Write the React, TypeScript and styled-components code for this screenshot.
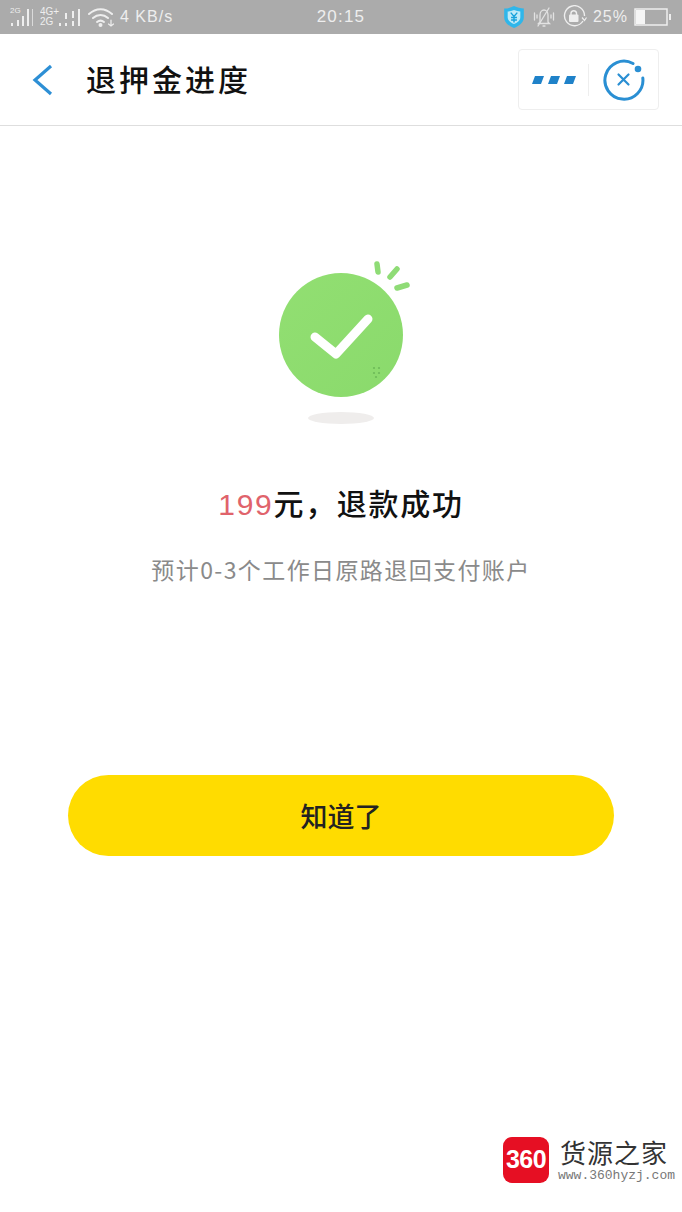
import * as React from 'react';
import styled, { createGlobalStyle } from 'styled-components';

const GlobalStyle = createGlobalStyle`
  html, body {
    margin: 0;
    padding: 0;
    background: #fff;
  }
  * {
    box-sizing: border-box;
  }
`;

const cjk = `"Noto Sans CJK SC", "Noto Sans", sans-serif`;

const Page = styled.div`
  position: relative;
  width: 682px;
  height: 1212px;
  overflow: hidden;
  background: #fff;
  font-family: ${cjk};
`;

const StatusBar = styled.div`
  display: grid;
  grid-template-columns: 1fr auto 1fr;
  align-items: center;
  height: 34px;
  padding: 0 10px;
  background: #ababab;
  color: #eeeeee;
`;

const StatusGroup = styled.div<{ $end?: boolean }>`
  display: flex;
  align-items: center;
  justify-content: ${(p) => (p.$end ? 'flex-end' : 'flex-start')};
  gap: ${(p) => (p.$end ? '6px' : '7px')};
`;

const StatusText = styled.span`
  font-family: "Liberation Sans", sans-serif;
  font-size: 16px;
  letter-spacing: 1px;
  white-space: nowrap;
`;

const Speed = styled(StatusText)`
  margin-left: -3px;
`;

const Clock = styled(StatusText)`
  font-size: 17px;
  letter-spacing: 1.2px;
`;

const Header = styled.header`
  display: flex;
  align-items: center;
  height: 92px;
  padding: 0 23px 0 31px;
  border-bottom: 1px solid #dedede;
`;

const BackButton = styled.button`
  display: flex;
  width: 55px;
  padding: 0;
  border: 0;
  background: none;
`;

const Title = styled.h1`
  flex: 1;
  margin: 0;
  padding-bottom: 4px;
  color: #111;
  font-size: 30px;
  font-weight: 500;
  letter-spacing: 3px;
`;

const Capsule = styled.div`
  display: flex;
  align-items: center;
  width: 141px;
  height: 61px;
  border: 1px solid #eeeeee;
  border-radius: 4px;
`;

const CapsuleSlot = styled.div`
  display: flex;
  flex: 1;
  align-items: center;
  justify-content: center;
  height: 100%;
`;

const CapsuleDivider = styled.div`
  width: 1px;
  height: 32px;
  background: #eeeeee;
`;

const Main = styled.main`
  display: flex;
  flex-direction: column;
  align-items: center;
  padding: 133px 68px 0;
`;

const ResultTitle = styled.h2`
  margin: 56px 0 0;
  color: #111;
  font-size: 30px;
  font-weight: 500;
  line-height: 44px;
  letter-spacing: 1.7px;
  white-space: nowrap;
`;

const Amount = styled.span`
  color: #e0636b;
  font-family: "Liberation Sans", sans-serif;
  font-weight: 400;
`;

const ResultNote = styled.p`
  margin: 25px 0 0;
  color: #8a8a8a;
  font-size: 23px;
  line-height: 34px;
  letter-spacing: 1.4px;
  white-space: nowrap;
`;

const ConfirmButton = styled.button`
  width: 546px;
  height: 81px;
  margin-top: 189px;
  border: 0;
  border-radius: 41px;
  background: #ffdc00;
  color: #222;
  font-family: ${cjk};
  font-size: 27px;
  font-weight: 500;
`;

const Watermark = styled.div`
  position: absolute;
  left: 503px;
  top: 1136px;
  display: flex;
  align-items: center;
  gap: 11px;
`;

const WatermarkLogo = styled.div`
  display: flex;
  align-items: center;
  justify-content: center;
  width: 46px;
  height: 46px;
  border-radius: 9px;
  background: #e60f23;
  color: #fff;
  font-family: "Liberation Sans", sans-serif;
  font-size: 25px;
  font-weight: 700;
  letter-spacing: -0.5px;
`;

const WatermarkText = styled.div`
  display: flex;
  flex-direction: column;
`;

const WatermarkName = styled.div`
  color: #333;
  font-family: "Noto Sans CJK SC", serif;
  font-size: 26px;
  line-height: 32px;
  letter-spacing: 1px;
`;

const WatermarkUrl = styled.div`
  margin-left: -2px;
  color: #777;
  font-family: "Liberation Mono", monospace;
  font-size: 13px;
  line-height: 15px;
  white-space: nowrap;
`;

const SignalIcon = () => (
  <svg width="23" height="22" viewBox="0 0 23 22" fill="#eee">
    <text x="0" y="7" fontSize="8" fontFamily="Liberation Sans">2G</text>
    <rect x="1" y="17" width="2" height="3" />
    <rect x="7" y="14" width="2" height="6" />
    <rect x="12" y="10" width="2" height="10" />
    <rect x="17" y="3" width="2" height="17" />
    <rect x="22" y="3" width="1" height="17" opacity="0.7" />
  </svg>
);

const DualSignalIcon = () => (
  <svg width="41" height="22" viewBox="0 0 41 22" fill="#eee">
    <text x="0" y="9" fontSize="10" fontFamily="Liberation Sans">4G+</text>
    <text x="0" y="19" fontSize="10" fontFamily="Liberation Sans">2G</text>
    <rect x="19" y="17" width="2" height="3" />
    <rect x="25" y="17" width="2" height="3" />
    <rect x="25" y="7" width="2" height="6" />
    <rect x="32" y="15" width="2" height="5" />
    <rect x="32" y="5" width="2" height="7" />
    <rect x="38" y="3" width="2" height="17" />
  </svg>
);

const WifiIcon = () => (
  <svg width="28" height="20" viewBox="0 0 28 20" fill="none" stroke="#eee" strokeWidth="2" strokeLinecap="round">
    <path d="M1 7c7-6.500 16-6.500 23 0" />
    <path d="M5 11c4.500-4 10.500-4 15 0" />
    <path d="M9 15c2.500-2 4.500-2 7 0" />
    <circle cx="12.500" cy="18" r="1" fill="#eee" />
    <path d="M23 13v6M20.500 17l2.500 2 2.500-2" strokeWidth="1.200" />
  </svg>
);

const ShieldIcon = () => (
  <svg width="24" height="24" viewBox="0 0 22 22">
    <path d="M11 1c3 1.500 6 2.200 9 2.200v8C20 16 15.500 19.500 11 21 6.500 19.500 2 16 2 11.200v-8c3 0 6-.7 9-2.200z" fill="#2fb6ea" />
    <path d="M11 4.500c2 .8 3.800 1.300 5.800 1.400v5.300c0 3-3 5.200-5.800 6.300-2.800-1.100-5.800-3.300-5.800-6.300V5.900c2-.1 3.800-.6 5.800-1.400z" fill="#bfeaf8" />
    <path d="M8 7l3 3.500L14 7M11 10.500V16M8.300 11.500h5.400M8.300 13.800h5.400" fill="none" stroke="#17a2dc" strokeWidth="1.300" />
  </svg>
);

const MuteIcon = () => (
  <svg width="24" height="22" viewBox="0 0 24 22" fill="none" stroke="#e2e2e2" strokeWidth="1.300" strokeLinecap="round">
    <path d="M8 16V9c0-3 2-5 4-5s4 2 4 5v7l1.500 1.500h-11z" />
    <path d="M11 20h2M17 2L6 20M2.500 7v7M5 9v3M21.500 7v7M19 9v3" />
  </svg>
);

const RotationLockIcon = () => (
  <svg width="25" height="24" viewBox="0 0 25 24" fill="none" stroke="#eee" strokeWidth="1.400">
    <path d="M21 16a10 10 0 1 1 1.500-5" />
    <path d="M20 12.500l2.500 3 2-3" strokeWidth="1.200" />
    <rect x="7" y="9.500" width="9.500" height="7.500" rx="1" fill="#eee" stroke="none" />
    <path d="M9 10V8a2.800 2.800 0 0 1 5.500 0v2" />
  </svg>
);

const BatteryIcon = () => (
  <svg width="38" height="18" viewBox="0 0 38 18">
    <rect x="1" y="1" width="32" height="16" fill="none" stroke="#eee" strokeWidth="1.500" />
    <rect x="2" y="2" width="9" height="14" fill="#f5f5f5" />
    <rect x="35" y="6" width="2" height="6" fill="#eee" />
  </svg>
);

const BackIcon = () => (
  <svg width="22" height="32" viewBox="0 0 22 32" fill="none" stroke="#2d8fd5" strokeWidth="3.200">
    <path d="M20 2L4 16l16 14" />
  </svg>
);

const MoreIcon = () => (
  <svg width="44" height="10" viewBox="0 0 44 10" fill="#1f82c9">
    <path d="M3 1h9l-3 8H0zM19 1h9l-3 8h-9zM35 1h9l-3 8h-9z" />
  </svg>
);

const CloseIcon = () => (
  <svg width="42" height="42" viewBox="0 0 42 42" fill="none" stroke="#2a8fd3" strokeLinecap="round">
    <path d="M30 4.500A19 19 0 1 0 39.800 19" strokeWidth="3" />
    <circle cx="35" cy="10" r="3.300" fill="#2a8fd3" stroke="none" />
    <path d="M15.500 15.500l10 10M25.500 15.500l-10 10" strokeWidth="2.200" />
  </svg>
);

const SuccessIllustration = () => (
  <svg width="140" height="165" viewBox="0 0 140 165">
    <defs>
      <linearGradient id="okFill" x1="0" y1="0" x2="1" y2="1">
        <stop offset="0" stopColor="#92df72" />
        <stop offset="1" stopColor="#8ada6c" />
      </linearGradient>
    </defs>
    <circle cx="70" cy="76" r="62" fill="url(#okFill)" />
    <path d="M44 78l21 17 32-35" fill="none" stroke="#fff" strokeWidth="9" strokeLinecap="round" strokeLinejoin="round" />
    <g stroke="#8fdc76" strokeWidth="5.500" strokeLinecap="round">
      <path d="M106 5l1 8" />
      <path d="M126 10l-7 8" />
      <path d="M136 26l-10 3" />
    </g>
    <g fill="#6dbb58">
      <circle cx="103" cy="109" r="1.100" />
      <circle cx="108" cy="109" r="1.100" />
      <circle cx="103" cy="114" r="1.100" />
      <circle cx="108" cy="114" r="1.100" />
      <circle cx="105" cy="118" r="1.100" />
    </g>
    <ellipse cx="70" cy="159" rx="33" ry="6" fill="#efedec" />
  </svg>
);

export default function App() {
  return (
    <Page>
      <GlobalStyle />
      <StatusBar>
        <StatusGroup>
          <SignalIcon />
          <DualSignalIcon />
          <WifiIcon />
          <Speed>4 KB/s</Speed>
        </StatusGroup>
        <Clock>20:15</Clock>
        <StatusGroup $end>
          <ShieldIcon />
          <MuteIcon />
          <RotationLockIcon />
          <StatusText>25%</StatusText>
          <BatteryIcon />
        </StatusGroup>
      </StatusBar>
      <Header>
        <BackButton aria-label="返回">
          <BackIcon />
        </BackButton>
        <Title>退押金进度</Title>
        <Capsule>
          <CapsuleSlot>
            <MoreIcon />
          </CapsuleSlot>
          <CapsuleDivider />
          <CapsuleSlot>
            <CloseIcon />
          </CapsuleSlot>
        </Capsule>
      </Header>
      <Main>
        <SuccessIllustration />
        <ResultTitle>
          <Amount>199</Amount>元，退款成功
        </ResultTitle>
        <ResultNote>预计0-3个工作日原路退回支付账户</ResultNote>
        <ConfirmButton>知道了</ConfirmButton>
      </Main>
      <Watermark>
        <WatermarkLogo>360</WatermarkLogo>
        <WatermarkText>
          <WatermarkName>货源之家</WatermarkName>
          <WatermarkUrl>www.360hyzj.com</WatermarkUrl>
        </WatermarkText>
      </Watermark>
    </Page>
  );
}
